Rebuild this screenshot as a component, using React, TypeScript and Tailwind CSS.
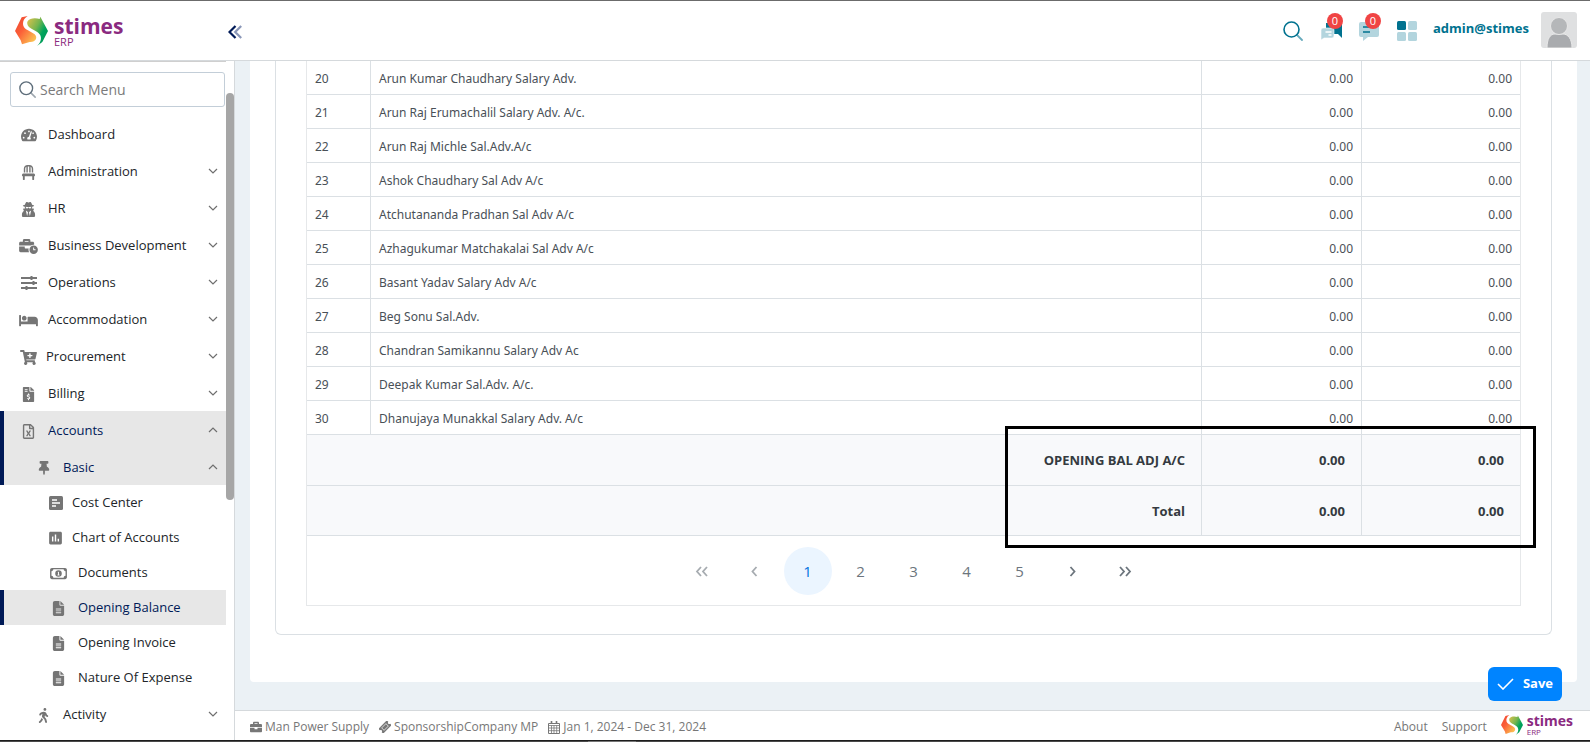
import type { ReactNode } from "react";
import {
  FaBed,
  FaBriefcase,
  FaBusinessTime,
  FaCartPlus,
  FaChair,
  FaFileInvoiceDollar,
  FaRegFileExcel,
  FaTachometerAlt,
  FaThumbtack,
  FaUserSecret,
  FaWalking,
} from "react-icons/fa";
import { FaFileLines, FaRegMoneyBill1 } from "react-icons/fa6";
import { MdAssessment } from "react-icons/md";

function LogoMark({ className }: { className: string }) {
  return (
    <svg viewBox="0 0 99 90" className={className} aria-hidden="true">
      <defs>
        <linearGradient id="logo-warm" x1="0" y1="0.2" x2="0.8" y2="1">
          <stop offset="0" stopColor="#f04a32" />
          <stop offset="0.4" stopColor="#fb5f38" />
          <stop offset="1" stopColor="#fbc452" />
        </linearGradient>
        <linearGradient id="logo-cool" x1="0" y1="0" x2="0.9" y2="0.7">
          <stop offset="0" stopColor="#e6c24c" />
          <stop offset="0.5" stopColor="#74b54f" />
          <stop offset="0.8" stopColor="#00a45c" />
          <stop offset="1" stopColor="#009a58" />
        </linearGradient>
      </defs>
      <path
        d="M20 4 L38 0 C27 7 22 18 25 29 C29 42 47 44 59 55 C69 65 63 79 44 78 L21 85 L17 73 L0 45 Z"
        fill="url(#logo-warm)"
      />
      <path
        d="M37 17 C44 5 62 5 74 9 L76 2 L84 17 L99 45 L82 78 L66 90 C77 80 81 66 75 56 C67 43 45 40 39 29 C37 25 36 21 37 17 Z"
        fill="url(#logo-cool)"
      />
    </svg>
  );
}

function SearchIcon({ className }: { className: string }) {
  return (
    <svg viewBox="0 0 20 20" fill="none" className={className} aria-hidden="true">
      <circle cx="8.5" cy="8.5" r="7.5" stroke="currentColor" strokeWidth="1.6" />
      <path d="M14 14l5 5" stroke="currentColor" strokeWidth="1.8" strokeLinecap="round" opacity="0.6" />
    </svg>
  );
}

function TuneIcon() {
  return (
    <svg viewBox="0 0 16 14" className="h-[14px] w-4" fill="none" stroke="currentColor" aria-hidden="true">
      <path d="M0 2h16M0 7h16M0 12h16" strokeWidth="1.8" />
      <path d="M10.500 0v4M12.500 5v4M5.500 10v4" strokeWidth="2" />
    </svg>
  );
}

function AlignBoxIcon() {
  return (
    <svg viewBox="0 0 14 14" className="size-[14px]" aria-hidden="true">
      <rect width="14" height="14" rx="1.500" fill="currentColor" />
      <path d="M3 4h5M3 7h8M3 10h4" stroke="#fff" strokeWidth="1.600" />
    </svg>
  );
}

function Chevron({ up }: { up?: boolean }) {
  return (
    <svg viewBox="0 0 10 6" className="mb-[3px] h-[6px] w-[10px] shrink-0 text-[#6f6f6f]" fill="none" aria-hidden="true">
      <path d={up ? "M1 5l4-4 4 4" : "M1 1l4 4 4-4"} stroke="currentColor" strokeWidth="1.200" />
    </svg>
  );
}

function TicketIcon() {
  return (
    <svg viewBox="0 0 14 14" className="size-3" aria-hidden="true">
      <g transform="rotate(-45 7 7)">
        <path
          d="M0 3h14v2.500a1.500 1.500 0 0 0 0 3V11H0V8.500a1.500 1.500 0 0 0 0-3z"
          fill="currentColor"
        />
        <path d="M3.500 5h7v4h-7z" fill="none" stroke="#fff" strokeWidth=".8" />
      </g>
    </svg>
  );
}

function CalendarIcon() {
  return (
    <svg viewBox="0 0 12 13" className="h-[13px] w-3" fill="none" stroke="currentColor" aria-hidden="true">
      <path d="M.5 2.500h11v10H.5z" />
      <path d="M.5 4.500h11M.5 7h11M.5 9.700h11M3.500 4.500v8M6 4.500v8M8.700 4.500v8" strokeWidth=".8" />
      <path d="M3.500 0v3M8.500 0v3" strokeWidth="1.600" />
    </svg>
  );
}

type MenuItem = { label: string; icon: ReactNode; chevron?: "up" | "down"; active?: boolean; tight?: boolean };

const mainMenu: MenuItem[] = [
  { label: "Dashboard", icon: <FaTachometerAlt className="size-4" /> },
  { label: "Administration", icon: <FaChair className="size-[15px]" />, chevron: "down" },
  { label: "HR", icon: <FaUserSecret className="size-[15px]" />, chevron: "down" },
  { label: "Business Development", icon: <FaBusinessTime className="h-[15px] w-[19px]" />, chevron: "down" },
  { label: "Operations", icon: <TuneIcon />, chevron: "down" },
  { label: "Accommodation", icon: <FaBed className="h-[15px] w-[19px]" />, chevron: "down" },
  { label: "Procurement", icon: <FaCartPlus className="h-[15px] w-[17px]" />, chevron: "down", tight: true },
  { label: "Billing", icon: <FaFileInvoiceDollar className="size-[15px]" />, chevron: "down" },
  { label: "Accounts", icon: <FaRegFileExcel className="size-[15px]" />, chevron: "up", active: true },
];

const basicMenu: { label: string; icon: ReactNode; active?: boolean; near?: boolean }[] = [
  { label: "Cost Center", icon: <AlignBoxIcon />, near: true },
  { label: "Chart of Accounts", icon: <MdAssessment className="size-[18px]" />, near: true },
  { label: "Documents", icon: <FaRegMoneyBill1 className="h-[15px] w-[17px]" /> },
  { label: "Opening Balance", icon: <FaFileLines className="size-[15px]" />, active: true },
  { label: "Opening Invoice", icon: <FaFileLines className="size-[15px]" /> },
  { label: "Nature Of Expense", icon: <FaFileLines className="size-[15px]" /> },
];

function MenuRow({ label, icon, chevron, active, tight }: MenuItem) {
  return (
    <li>
      <a
        href="#"
        className={`flex h-[37px] items-center border-l-4 pt-[3px] pr-2 ${
          active ? "border-[#001a57] bg-[#e7e7e7] text-[#001a57]" : "border-transparent"
        }`}
      >
        <span className={`ml-[14px] flex w-[21px] justify-center text-[#757575] ${tight ? "mr-[7px]" : "mr-[9px]"}`}>
          {icon}
        </span>
        <span className="flex-1 truncate">{label}</span>
        {chevron && <Chevron up={chevron === "up"} />}
      </a>
    </li>
  );
}

function SubRow({ label, icon, chevron, active }: MenuItem) {
  return (
    <a
      href="#"
      className={`flex h-[37px] items-center border-l-4 pt-[3px] pr-2 ${
        active ? "border-[#001a57] bg-[#e7e7e7] text-[#001a57]" : "border-transparent"
      }`}
    >
      <span className="mr-[12px] ml-[32px] flex w-[15px] justify-center text-[#757575]">{icon}</span>
      <span className="flex-1">{label}</span>
      {chevron && <Chevron up={chevron === "up"} />}
    </a>
  );
}

function Sidebar() {
  return (
    <aside className="flex w-[235px] shrink-0 border-r border-[#d5d9dc] bg-white">
      <div className="min-w-0 flex-1 overflow-hidden border-t border-[#cfcfcf]">
        <label className="mx-[10px] mt-[10px] mr-px flex h-[35px] items-center gap-1 rounded-[3px] border border-[#c3ced8] px-2">
          <SearchIcon className="size-[17px] text-[#5d6d7a]" />
          <input
            type="text"
            aria-label="Search Menu"
            placeholder="Search Menu"
            className="h-full min-w-0 flex-1 text-[14px] outline-none placeholder:text-[#7a7a7a]"
          />
        </label>
        <nav className="mt-2 text-[13px] text-[#212529]">
          <ul>
            {mainMenu.map((item) => (
              <MenuRow key={item.label} {...item} />
            ))}
            <li>
              <SubRow label="Basic" icon={<FaThumbtack className="size-[14px]" />} chevron="up" active />
              <ul>
                {basicMenu.map((item) => (
                  <li key={item.label}>
                    <a
                      href="#"
                      className={`flex h-[35px] items-center border-l-4 pt-px ${
                        item.active ? "border-[#001a57] bg-[#e7e7e7] text-[#001a57]" : "border-transparent"
                      }`}
                    >
                      <span
                        className={`flex justify-center text-[#757575] ${
                          item.near ? "mr-[8px] ml-[43px] w-[17px]" : "mr-[10px] ml-[45px] w-[19px]"
                        }`}
                      >
                        {item.icon}
                      </span>
                      {item.label}
                    </a>
                  </li>
                ))}
              </ul>
            </li>
            <li>
              <SubRow label="Activity" icon={<FaWalking className="size-[15px]" />} chevron="down" />
            </li>
          </ul>
        </nav>
      </div>
      <div className="w-2 shrink-0 pt-8">
        <div className="h-[407px] rounded-full bg-[#a6a6a6]" />
      </div>
    </aside>
  );
}

function Badge() {
  return (
    <span className="absolute -top-2 left-[6px] flex size-4 items-center justify-center rounded-full bg-[#f04444] text-[11px] leading-none text-white">
      0
    </span>
  );
}

function Header() {
  return (
    <header className="flex h-[61px] shrink-0 items-center border-t border-b border-t-[#6b6b6b] border-b-[#d5d9dc] bg-white pr-[13px] pl-[15px]">
      <a href="#" className="flex w-[213px] items-center gap-[6px]" aria-label="stimes ERP">
        <LogoMark className="h-[30px] w-[33px]" />
        <span className="flex flex-col text-[#8a2a80]">
          <span className="text-[21px] leading-[22px] font-bold">stimes</span>
          <span className="text-[11px] leading-[10px]">ERP</span>
        </span>
      </a>
      <button type="button" aria-label="Collapse menu">
        <svg viewBox="0 0 14 14" className="mt-[2px] size-[14px]" fill="none" strokeWidth="2.200" aria-hidden="true">
          <path d="M7.500 1l-6 6 6 6" stroke="#001a57" />
          <path d="M13.200 1l-6 6 6 6" stroke="#8a97b8" />
        </svg>
      </button>
      <div className="ml-auto flex items-center text-[#00728f]">
        <button type="button" aria-label="Search" className="mr-[18px]">
          <SearchIcon className="size-5" />
        </button>
        <button type="button" aria-label="Chats" className="relative mr-[16px]">
          <svg viewBox="0 0 22 20" className="h-5 w-[22px]" aria-hidden="true">
            <path d="M5 2h16v15l-4-4H5z" fill="#00728f" />
            <path
              d="M3 7h8a2 2 0 0 1 2 2v6a2 2 0 0 1-2 2H3l-3 2V9a2 2 0 0 1 2-2z"
              fill="#b3d5de"
              stroke="#fff"
              strokeWidth=".6"
            />
            <path d="M4.500 11h6M7.500 14h3" stroke="#fff" strokeWidth="1.300" />
          </svg>
          <Badge />
        </button>
        <button type="button" aria-label="Messages" className="relative mr-[18px]">
          <svg viewBox="0 0 20 20" className="size-5" aria-hidden="true">
            <path d="M2 1h16a2 2 0 0 1 2 2v11a2 2 0 0 1-2 2h-9l-5 4v-4H2a2 2 0 0 1-2-2V3a2 2 0 0 1 2-2z" fill="#b3d5de" />
            <path d="M4 6h7M4 11h7" stroke="#00728f" strokeWidth="1.600" />
          </svg>
          <Badge />
        </button>
        <button type="button" aria-label="Apps" className="mr-4">
          <svg viewBox="0 0 20 20" className="size-5" aria-hidden="true">
            <rect width="9" height="9" rx="1.500" fill="#00728f" />
            <rect x="11" width="9" height="9" rx="1.500" fill="#b3d5de" />
            <rect y="11" width="9" height="9" rx="1.500" fill="#b3d5de" />
            <rect x="11" y="11" width="9" height="9" rx="1.500" fill="#b3d5de" />
          </svg>
        </button>
        <span className="mr-3 pb-1 text-[13px] font-bold">admin@stimes</span>
        <svg viewBox="0 0 36 36" className="mb-[2px] size-9 rounded-[3px] bg-[#dfe0e1]" role="img" aria-label="User">
          <path d="M6 36c0-9 3-14 8-14h8c5 0 9 5 9 14z" fill="#a9abae" stroke="#e8e8e8" />
          <circle cx="18" cy="14" r="8.500" fill="#b5b7b9" stroke="#e8e8e8" />
        </svg>
      </div>
    </header>
  );
}

const ledgers = [
  "Arun Kumar Chaudhary Salary Adv.",
  "Arun Raj Erumachalil Salary Adv. A/c.",
  "Arun Raj Michle Sal.Adv.A/c",
  "Ashok Chaudhary Sal Adv A/c",
  "Atchutananda Pradhan Sal Adv A/c",
  "Azhagukumar Matchakalai Sal Adv A/c",
  "Basant Yadav Salary Adv A/c",
  "Beg Sonu Sal.Adv.",
  "Chandran Samikannu Salary Adv Ac",
  "Deepak Kumar Sal.Adv. A/c.",
  "Dhanujaya Munakkal Salary Adv. A/c",
];

function Arrow({ left, double }: { left?: boolean; double?: boolean }) {
  const one = left ? "M8.500 2l-4 4.500 4 4.500" : "M4.500 2l4 4.500-4 4.500";
  const two = left
    ? "M6 2l-4 4.500 4 4.500M12 2l-4 4.500 4 4.500"
    : "M1 2l4 4.500-4 4.500M7 2l4 4.500-4 4.500";
  return (
    <svg viewBox="0 0 13 13" className="size-[13px]" fill="none" aria-hidden="true">
      <path d={double ? two : one} stroke="currentColor" strokeWidth="1.800" />
    </svg>
  );
}

function LedgerTable() {
  return (
    <div className="relative border-r border-b border-l border-[#e6e8ea]">
      <table className="w-full table-fixed border-separate border-spacing-0 text-[12px] text-[#495057] [&_td]:border-b [&_td]:border-[#dbe0e4] [&_th]:border-b [&_th]:border-[#dbe0e4]">
        <colgroup>
          <col className="w-[64px]" />
          <col />
          <col className="w-[160px]" />
          <col className="w-[158px]" />
        </colgroup>
        <tbody className="font-['Noto_Sans',sans-serif]">
          {ledgers.map((name, i) => (
            <tr key={name} className="h-[34px]">
              <td className="border-r px-2 pt-[2px] pb-0">{20 + i}</td>
              <td className="truncate border-r px-2 pt-[2px] pb-0">{name}</td>
              <td className="border-r px-2 pt-[2px] pb-0 text-right">0.00</td>
              <td className="px-2 pt-[2px] pb-0 text-right">0.00</td>
            </tr>
          ))}
        </tbody>
        <tfoot className="bg-[#f8f9fb] text-[13px] font-bold text-[#343a40]">
          <tr className="h-[51px] [&>*]:border-b-2">
            <th scope="row" colSpan={2} className="border-r px-4 pt-[2px] pb-0 text-right">
              OPENING BAL ADJ A/C
            </th>
            <td className="border-r px-4 pt-[2px] pb-0 text-right">0.00</td>
            <td className="px-4 pt-[2px] pb-0 text-right">0.00</td>
          </tr>
          <tr className="h-[50px]">
            <th scope="row" colSpan={2} className="border-r px-4 pt-[2px] pb-0 text-right">
              Total
            </th>
            <td className="border-r px-4 pt-[2px] pb-0 text-right">0.00</td>
            <td className="px-4 pt-[2px] pb-0 text-right">0.00</td>
          </tr>
        </tfoot>
      </table>
      <nav
        aria-label="Pages"
        className="flex items-center justify-center gap-[5px] pt-[11px] pb-[10px] text-[15px] text-[#6c757d] [&>button]:flex [&>button]:size-12 [&>button]:items-center [&>button]:justify-center [&>button]:rounded-full"
      >
        <button type="button" disabled aria-label="First page" className="opacity-60">
          <Arrow left double />
        </button>
        <button type="button" disabled aria-label="Previous page" className="opacity-60">
          <Arrow left />
        </button>
        <button type="button" aria-current="page" className="bg-[#ebf5ff] text-[#0072e0]">
          1
        </button>
        <button type="button">2</button>
        <button type="button">3</button>
        <button type="button">4</button>
        <button type="button">5</button>
        <button type="button" aria-label="Next page">
          <Arrow />
        </button>
        <button type="button" aria-label="Last page">
          <Arrow double />
        </button>
      </nav>
      <div className="pointer-events-none absolute -right-4 bottom-[57px] h-[122px] w-[531px] border-3 border-black" />
    </div>
  );
}

function Footer() {
  return (
    <footer className="flex h-[30px] shrink-0 items-center border-t border-[#d5d9dc] bg-white pt-[3px] pr-[17px] pl-[15px] text-[12px] text-[#777]">
      <span className="flex items-center gap-[3px]">
        <FaBriefcase className="size-3" /> Man Power Supply
      </span>
      <span className="ml-[10px] flex items-center gap-[3px]">
        <TicketIcon /> SponsorshipCompany MP
      </span>
      <span className="ml-[10px] flex items-center gap-[3px]">
        <CalendarIcon /> Jan 1, 2024 - Dec 31, 2024
      </span>
      <nav className="ml-auto flex items-center gap-[14px]">
        <a href="#">About</a>
        <a href="#">Support</a>
        <a href="#" className="flex items-center gap-1 pb-1" aria-label="stimes ERP">
          <LogoMark className="h-5 w-[22px]" />
          <span className="flex flex-col text-[#8a2a80]">
            <span className="text-[14px] leading-[14px] font-bold">stimes</span>
            <span className="text-[8px] leading-[8px]">ERP</span>
          </span>
        </a>
      </nav>
    </footer>
  );
}

export default function App() {
  return (
    <div className="flex h-screen flex-col overflow-hidden bg-white font-['Open_Sans','Noto_Sans',sans-serif]">
      <Header />
      <div className="flex min-h-0 flex-1">
        <Sidebar />
        <div className="relative flex min-w-0 flex-1 flex-col bg-[#ebf1f5]">
          <main className="min-h-0 flex-1 overflow-hidden pr-[13px] pl-[15px]">
            <div className="rounded-b-[4px] bg-white px-[25px] pb-[47px]">
              <div className="rounded-b-[6px] border-r border-b border-l border-[#dbe0e4] px-[30px] pb-[28px]">
                <LedgerTable />
              </div>
            </div>
          </main>
          <button
            type="button"
            className="absolute right-7 bottom-[39px] flex h-[34px] items-center gap-[9px] rounded-[6px] bg-[#0084ff] px-[9px] text-[13px] font-bold text-white"
          >
            <svg viewBox="0 0 17 12" className="h-3 w-[17px]" fill="none" aria-hidden="true">
              <path d="M1 6l5 5L16 1" stroke="currentColor" strokeWidth="1.600" />
            </svg>
            Save
          </button>
          <Footer />
        </div>
      </div>
      <div className="flex h-[2px] shrink-0 border-t border-[#1c1c1c] bg-[#4b4b4b]">
        <div className="ml-[37%] w-12 bg-[#767676]" />
      </div>
    </div>
  );
}
